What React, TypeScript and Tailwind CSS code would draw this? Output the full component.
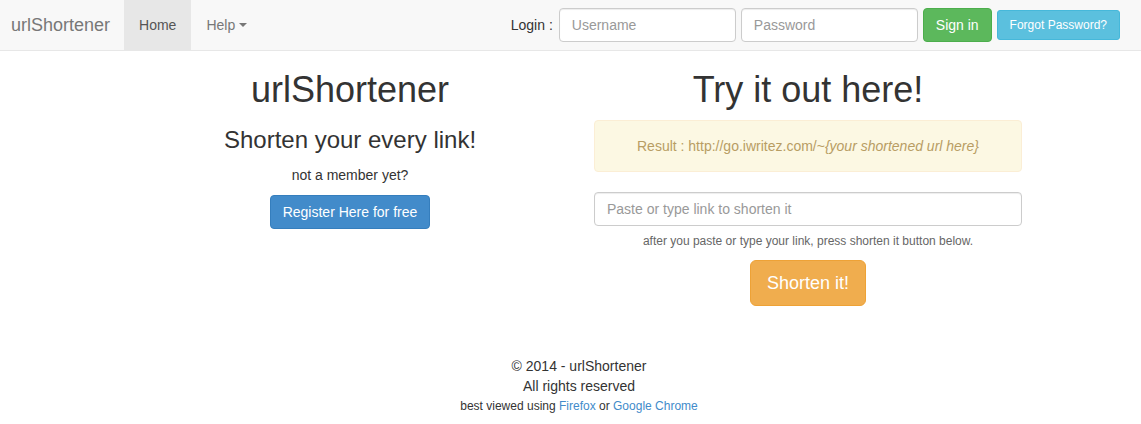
import React from "react";

const NavBar: React.FC = () => {
  return (
    <nav className="flex h-[51px] items-stretch border-b border-[#e7e7e7] bg-[#f8f8f8]">
      <a className="flex items-center pl-[11px] pr-[14px] text-[18px] leading-[20px] text-[#777]">
        urlShortener
      </a>
      <ul className="flex items-stretch text-[14px]">
        <li className="flex items-center bg-[#e7e7e7] px-[15px] text-[#555]">Home</li>
        <li className="flex items-center px-[15px] text-[#777]">
          Help
          <span className="ml-[4px] inline-block h-0 w-0 border-x-[4px] border-t-[4px] border-x-transparent border-t-[#777]" />
        </li>
      </ul>
      <form className="ml-auto flex items-center pr-[21px] text-[14px]">
        <span className="mr-[6px] text-[#333]">Login :</span>
        <input
          placeholder="Username"
          className="mr-[5px] h-[34px] w-[177px] rounded-[4px] border border-[#ccc] bg-white px-[12px] py-[6px] text-[#555] shadow-[inset_0_1px_1px_rgba(0,0,0,0.075)] outline-none placeholder:text-[#999]"
        />
        <input
          type="password"
          placeholder="Password"
          className="mr-[5px] h-[34px] w-[177px] rounded-[4px] border border-[#ccc] bg-white px-[12px] py-[6px] text-[#555] shadow-[inset_0_1px_1px_rgba(0,0,0,0.075)] outline-none placeholder:text-[#999]"
        />
        <button
          type="button"
          className="mr-[5px] h-[34px] rounded-[4px] border border-[#4cae4c] bg-[#5cb85c] px-[12px] leading-[20px] text-white"
        >
          Sign in
        </button>
        <button
          type="button"
          className="h-[30px] rounded-[3px] border border-[#46b8da] bg-[#5bc0de] px-[12px] text-[12px] leading-[18px] text-white"
        >
          Forgot Password?
        </button>
      </form>
    </nav>
  );
};

export default function App() {
  return (
    <div className="min-h-[424px] bg-white font-['Liberation_Sans',Arial,sans-serif] text-[14px] leading-[20px] text-[#333]">
      <NavBar />
      <main className="pl-[121px] pt-[19px]">
        <div className="grid w-[916px] grid-cols-2">
          <section className="px-[15px] text-center">
            <h1 className="mb-[17px] text-[36px] font-normal leading-[39.6px]">urlShortener</h1>
            <h3 className="mb-[12px] text-[24px] font-normal leading-[26.4px]">
              Shorten your every link!
            </h3>
            <p className="mb-[10px]">not a member yet?</p>
            <button
              type="button"
              className="h-[34px] rounded-[4px] border border-[#357ebd] bg-[#428bca] px-[12px] leading-[20px] text-white"
            >
              Register Here for free
            </button>
          </section>

          <section className="px-[15px] text-center">
            <h1 className="mb-[10px] text-[36px] font-normal leading-[39.6px]">Try it out here!</h1>
            <div className="mb-[20px] rounded-[4px] border border-[#fbeed5] bg-[#fcf8e3] p-[15px] text-[#b89d63]">
              Result : http://go.iwritez.com/~<i>{"{your shortened url here}"}</i>
            </div>
            <input
              placeholder="Paste or type link to shorten it"
              className="block h-[34px] w-full rounded-[4px] border border-[#ccc] bg-white px-[12px] py-[6px] text-[#555] shadow-[inset_0_1px_1px_rgba(0,0,0,0.075)] outline-none placeholder:text-[#999]"
            />
            <p className="mt-[7px] text-[12px] leading-[17px] text-[#666]">
              after you paste or type your link, press shorten it button below.
            </p>
            <button
              type="button"
              className="mt-[10px] h-[46px] rounded-[6px] border border-[#eea236] bg-[#f0ad4e] px-[16px] text-[18px] leading-[24px] text-white"
            >
              Shorten it!
            </button>
          </section>
        </div>

        <footer className="mt-[50px] w-[916px] text-center">
          <p>© 2014 - urlShortener</p>
          <p>All rights reserved</p>
          <p className="text-[12px] leading-[20px]">
            best viewed using <a className="text-[#428bca]">Firefox</a> or{" "}
            <a className="text-[#428bca]">Google Chrome</a>
          </p>
        </footer>
      </main>
    </div>
  );
}
